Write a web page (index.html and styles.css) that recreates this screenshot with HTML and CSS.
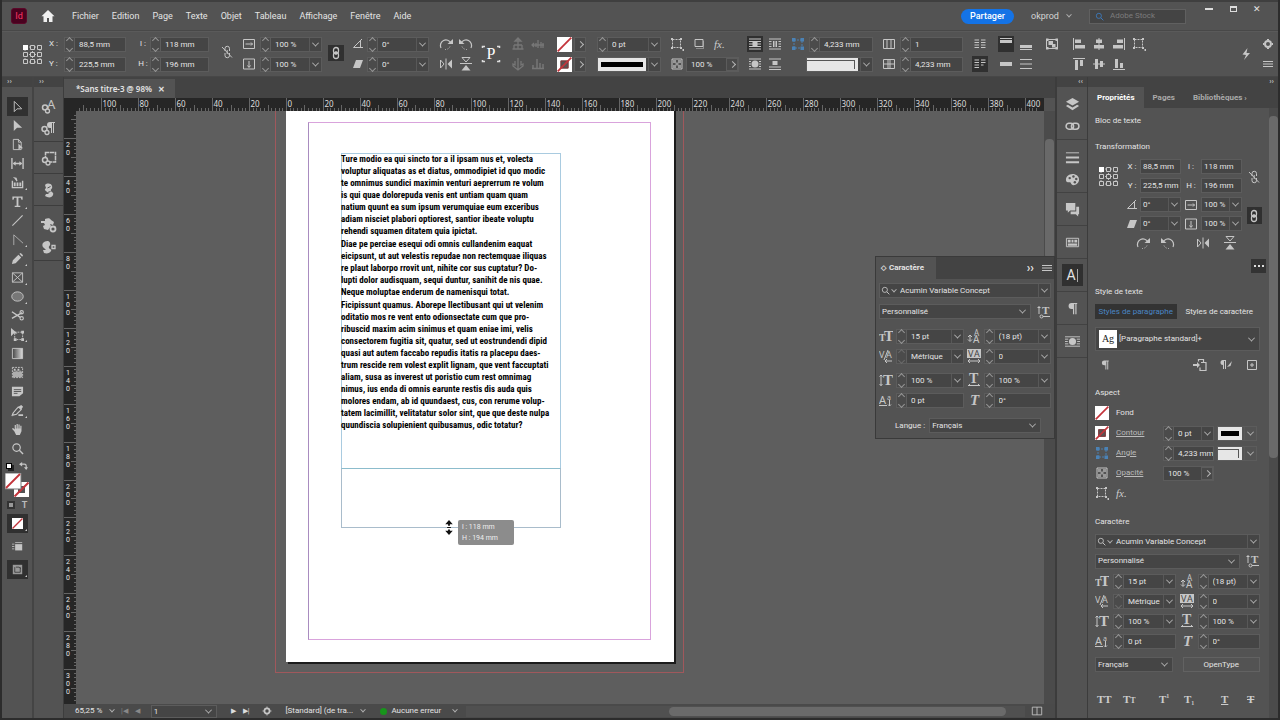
FILE: index.html
```html
<!DOCTYPE html>
<html lang="fr">
<head>
<meta charset="utf-8">
<title>Sans titre-3</title>
<link rel="stylesheet" href="styles.css">
</head>
<body>
<svg class="sprite" aria-hidden="true">
  <defs>
  <symbol id="home" viewBox="0 0 14 14"><path d="M7 1 0.5 7.2h2V13H6V9h2v4h3.500V7.200h2z" fill="currentColor"/></symbol>
  <symbol id="ref" viewBox="0 0 21 21"><path d="M3 3h15v15H3zM3 10.500h15M10.500 3v15" fill="none" stroke="#bbb" stroke-dasharray="1 1"/><g fill="#535353" stroke="#c8c8c8"><path d="M8.500 1.500h4v4h-4zM15.500 1.500h4v4h-4zM1.500 8.500h4v4h-4zM8.500 8.500h4v4h-4zM15.500 8.500h4v4h-4zM1.500 15.500h4v4h-4zM8.500 15.500h4v4h-4zM15.500 15.500h4v4h-4z"/></g><path d="M1 1h5v5H1z" fill="#fff"/></symbol>
  <symbol id="link" viewBox="0 0 14 14"><g fill="none" stroke="currentColor" stroke-width="1.300"><rect x="4.500" y="1.500" width="5" height="6" rx="2.500"/><rect x="4.500" y="6.500" width="5" height="6" rx="2.500"/><path d="M7 5v4"/></g></symbol>
  <symbol id="unlink" viewBox="0 0 14 14"><g fill="none" stroke="currentColor"><path d="M5 6V3.500a2 2 0 0 1 4.500 0V6M5 8v2.500a2 2 0 0 0 4.500 0V8M7.200 5v4M2 2l10 10.500"/></g></symbol>
  <symbol id="links" viewBox="0 0 14 14"><g fill="none" stroke="currentColor" stroke-width="1.400"><rect x="1" y="4" width="7" height="5.500" rx="2.700"/><rect x="6" y="4" width="7" height="5.500" rx="2.700"/></g></symbol>
  <symbol id="sx" viewBox="0 0 14 14"><path d="M1.500 2.500h11v9h-11zM3.500 7h7M9 5.500 10.500 7 9 8.500" fill="none" stroke="currentColor"/></symbol>
  <symbol id="sy" viewBox="0 0 14 14"><path d="M1.500 2h11v10h-11zM7 4v6M5.500 8.500 7 10.500 8.500 8.500" fill="none" stroke="currentColor"/></symbol>
  <symbol id="ang" viewBox="0 0 14 14"><path d="M11 2 2.500 10.500H12M9.500 4v6.500" fill="none" stroke="currentColor"/></symbol>
  <symbol id="shear" viewBox="0 0 14 14"><path d="M5 3h7l-3 8H2z" fill="currentColor"/></symbol>
  <symbol id="cw" viewBox="0 0 16 14"><path d="M3 11A5 5 0 1 1 13 6" fill="none" stroke="currentColor" stroke-width="1.200"/><path d="M9.500 7H15V2z" fill="currentColor"/><path d="M7 12.500a5 5 0 0 0 5-3" fill="none" stroke="currentColor" stroke-dasharray="1 1.500"/></symbol>
  <symbol id="ccw" viewBox="0 0 16 14"><path d="M13 11A5 5 0 1 0 3 6" fill="none" stroke="currentColor" stroke-width="1.200"/><path d="M6.500 7H1V2z" fill="currentColor"/><path d="M9 12.500a5 5 0 0 1-5-3" fill="none" stroke="currentColor" stroke-dasharray="1 1.500"/></symbol>
  <symbol id="fh" viewBox="0 0 16 14"><path d="M2.500 3v8L6 7zM8 1.500v11" fill="none" stroke="currentColor"/><path d="M14 2.500v9L9.500 7z" fill="currentColor"/></symbol>
  <symbol id="fv" viewBox="0 0 16 14"><path d="M4 .5h8L8 5zM2 6.500h12" fill="none" stroke="currentColor"/><path d="M3.500 13.500h9L8 8z" fill="currentColor"/></symbol>
  <symbol id="corners" viewBox="0 0 22 22"><path d="M2.500 5V3.500H5M17 3.500h2.500V5M19.500 17v1.500H17M5 18.500H2.500V17" fill="none" stroke="#ddd" stroke-width="1.500"/></symbol>
  <symbol id="t1" viewBox="0 0 14 14"><path d="M7 1v11M7 1l-3 3h6zM3 8v4M11 8v4M1.500 12h11M3 8h8" fill="none" stroke="currentColor" stroke-width="1.300"/></symbol>
  <symbol id="t2" viewBox="0 0 14 14"><path d="M1 8h12M3 6 1 8l2 2M7 3v8M10 5v6M12 6v5M5 6v4" fill="none" stroke="currentColor" stroke-width="1.300"/></symbol>
  <symbol id="t3" viewBox="0 0 14 14"><path d="M7 1v11M4 4v4l-2-1v2l5 4 5-4V7l-2 1V4" fill="none" stroke="currentColor" stroke-width="1.300"/></symbol>
  <symbol id="t4" viewBox="0 0 14 14"><path d="M2 8v4M6 2v10M9 6v6M12 7v5M1 11.500h12" fill="none" stroke="currentColor" stroke-width="1.500"/></symbol>
  <symbol id="none" viewBox="0 0 15 15"><path d="M0 0h15v15H0z" fill="#fff"/><path d="M.7 14.300 14.300.7" stroke="#c3343b" stroke-width="1.800"/></symbol>
  <symbol id="nstroke" viewBox="0 0 15 15"><path d="M0 0h15v15H0z" fill="#fff"/><path d="M3.500 3.500h8v8h-8z" fill="#555"/><path d="M4 4h7v7H4z" fill="none" stroke="#8a3035"/><path d="M.7 14.300 14.300.7" stroke="#c3343b" stroke-width="1.800"/></symbol>
  <symbol id="frame" viewBox="0 0 14 14"><path d="M2.500 2.500h8v8h-8z" fill="none" stroke="currentColor" stroke-dasharray="2 1"/><path d="M1 1h2v2H1zM10 1h2v2h-2zM1 10h2v2H1zM10 10h2v2h-2zM12.500 12H14v2h-1.500z" fill="currentColor"/></symbol>
  <symbol id="shadow" viewBox="0 0 14 14"><path d="M3 2.500h8v7H3z" fill="none" stroke="currentColor"/><path d="M4 11.500h8M11.500 4v8" stroke="currentColor" opacity=".5"/></symbol>
  <symbol id="opac" viewBox="0 0 14 14"><path d="M2 2h10v10H2z" fill="none" stroke="currentColor"/><path d="M3 3h3v3H3zM8 3h3v3H8zM5.500 5.500h3v3h-3zM3 8h3v3H3zM8 8h3v3H8z" fill="currentColor" opacity=".6"/></symbol>
  <symbol id="w1" viewBox="0 0 14 14"><path d="M1 2h12M1 4.500h12M1 7h12M1 9.500h12M1 12h12" stroke="currentColor"/><path d="M4.500 4h5v6h-5z" fill="currentColor"/></symbol>
  <symbol id="w2" viewBox="0 0 14 14"><path d="M1 2h12M1 12h12M1 4.500h2.500M1 7h2.500M1 9.500h2.500M10.500 4.500H13M10.500 7H13M10.500 9.500H13" stroke="currentColor"/><path d="M5 4h1.500v6H5zM7.500 4H9v6H7.500z" fill="currentColor"/></symbol>
  <symbol id="w3" viewBox="0 0 14 14"><path d="M1 2h12M1 12h12M1 4.500h2M1 7h2M1 9.500h2M11 4.500h2M11 7h2M11 9.500h2" stroke="currentColor"/><circle cx="7" cy="7" r="3.500" fill="currentColor"/></symbol>
  <symbol id="w4" viewBox="0 0 14 14"><path d="M1 2h12M1 10h12M1 12.500h12" stroke="currentColor"/><path d="M4.500 4h5v4h-5z" fill="currentColor"/></symbol>
  <symbol id="corner" viewBox="0 0 14 14"><path d="M3 3v8h8V3z" fill="none" stroke="#4d7fae" stroke-dasharray="2 1"/><path d="M1 1h3.500v3.500H1zM9.500 1H13v3.500H9.500zM1 9.500h3.500V13H1zM9.500 9.500H13V13H9.500z" fill="#4b82b5"/></symbol>
  <symbol id="cols" viewBox="0 0 14 14"><path d="M1.500 2.500h11v9h-11zM5 2.500v9M9 2.500v9" fill="none" stroke="currentColor"/></symbol>
  <symbol id="split" viewBox="0 0 14 14"><path d="M1.500 2.500h11v9h-11zM7 2.500v9" fill="none" stroke="currentColor"/></symbol>
  <symbol id="cells" viewBox="0 0 14 14"><path d="M1.500 2.500h11v9h-11zM1.500 7h11M6 2.500v9M8 2.500v9" fill="none" stroke="currentColor"/></symbol>
  <symbol id="bal" viewBox="0 0 14 14"><path d="M1.500 3h4.500M1.500 5.500h4.500M1.500 8h4.500M1.500 10.500h4.500M8 3h4.500M8 5.500h4.500M8 8h4.500M8 10.500h4.500" stroke="currentColor"/></symbol>
  <symbol id="bal2" viewBox="0 0 14 14"><path d="M1.500 3h4.500M1.500 5.500h4.500M1.500 8h4.500M1.500 10.500h4.500M8 3h4.500M8 5.500h4.500M8 8h2.500" stroke="currentColor"/></symbol>
  <symbol id="vt" viewBox="0 0 14 14"><path d="M1 1.500h12" stroke="currentColor"/><path d="M1 3h12v3H1z" fill="currentColor"/></symbol>
  <symbol id="vb" viewBox="0 0 14 14"><path d="M1 12.500h12" stroke="currentColor"/><path d="M1 8h12v3H1z" fill="currentColor"/></symbol>
  <symbol id="vm" viewBox="0 0 14 14"><path d="M1 5h12v4H1z" fill="currentColor"/></symbol>
  <symbol id="vj" viewBox="0 0 14 14"><path d="M1 2.500h12M1 7h12M1 11.500h12" stroke="currentColor"/></symbol>
  <symbol id="fit" viewBox="0 0 14 14"><path d="M1.500 2.500h11v9h-11z" fill="none" stroke="currentColor"/><path d="M1 1.500h2.500V4H1zM10.500 1.500H13V4h-2.500zM1 10h2.500v2.500H1zM10.500 10H13v2.500h-2.500zM3.500 4H8v4H3.500zM7 7h3.500v3.500H7z" fill="currentColor"/></symbol>
  <symbol id="al" viewBox="0 0 14 14"><path d="M1.500 1v12" stroke="currentColor"/><path d="M3 2.500h6v3.500H3zM3 8h10v3.500H3z" fill="currentColor"/></symbol>
  <symbol id="ac" viewBox="0 0 14 14"><path d="M7 1v12" stroke="currentColor"/><path d="M4 2.500h6V6H4zM2 8h10v3.500H2z" fill="currentColor"/></symbol>
  <symbol id="ar" viewBox="0 0 14 14"><path d="M12.500 1v12" stroke="currentColor"/><path d="M5 2.500h6V6H5zM1 8h10v3.500H1z" fill="currentColor"/></symbol>
  <symbol id="at" viewBox="0 0 14 14"><path d="M1 1.500h12" stroke="currentColor"/><path d="M3 3h3v10H3zM8 3h3v6H8z" fill="currentColor"/></symbol>
  <symbol id="am" viewBox="0 0 14 14"><path d="M1 7h12" stroke="currentColor"/><path d="M3 2h3v10H3zM8 4h3v6H8z" fill="currentColor"/></symbol>
  <symbol id="ab" viewBox="0 0 14 14"><path d="M1 12.500h12" stroke="currentColor"/><path d="M3 2h3v9H3zM8 6h3v5H8z" fill="currentColor"/></symbol>
  <symbol id="bolt" viewBox="0 0 14 14"><path d="M8.500 1 3.500 7.500 7 8 5 13 11 6 7.500 6z" fill="currentColor"/></symbol>
  <symbol id="gear" viewBox="0 0 14 14"><circle cx="7" cy="7" r="3" fill="none" stroke="currentColor" stroke-width="2"/><path d="M7 2v1M7 11v1M2 7h1M11 7h1" stroke="currentColor" stroke-width="2"/></symbol>
  <symbol id="menu" viewBox="0 0 14 14"><path d="M2 4.500h10M2 7h10M2 9.500h10" stroke="currentColor"/></symbol>
  <symbol id="search" viewBox="0 0 14 14"><circle cx="6" cy="6" r="4" fill="none" stroke="currentColor" stroke-width="1.300"/><path d="m9 9 4 4" stroke="currentColor" stroke-width="1.500"/></symbol>
  <symbol id="sel" viewBox="0 0 14 14"><path d="M3.500 1.500v11l3-3h5z" fill="none" stroke="currentColor"/></symbol>
  <symbol id="dsel" viewBox="0 0 14 14"><path d="M3 1v12l3.500-3.500H12z" fill="currentColor"/></symbol>
  <symbol id="page" viewBox="0 0 14 14"><path d="M2.500 1.500H8l3 3v8H2.500zM8 1.500v3h3" fill="none" stroke="currentColor"/><path d="M8 6v7l2-2h3z" fill="currentColor"/></symbol>
  <symbol id="gap" viewBox="0 0 14 14"><path d="M1 1v12M13 1v12M2.500 7h9" stroke="currentColor" stroke-width="1.500"/><path d="M5 4.500 2 7l3 2.500zM9 4.500 12 7 9 9.500z" fill="currentColor"/></symbol>
  <symbol id="collect" viewBox="0 0 14 14"><path d="M1.500 5v7.500h11V5" fill="none" stroke="currentColor" stroke-width="1.500"/><path d="M3 7h2v4H3zM6 7h2v4H6zM9 7h2v4H9zM2 1l4 1 1 3-1 1-2-3z" fill="currentColor"/></symbol>
  <symbol id="type" viewBox="0 0 14 14"><path d="M1.500 1.500h11v3.500h-1.200L10.500 3H8v8.500h2V13H4v-1.500h2V3H3.500L2.700 5H1.500z" fill="currentColor"/></symbol>
  <symbol id="line" viewBox="0 0 14 14"><path d="m1.500 12.500 11-11" stroke="currentColor" stroke-width="1.200"/></symbol>
  <symbol id="pen" viewBox="0 0 14 14"><path d="M3 13V2l10 9" fill="none" stroke="currentColor" stroke-opacity=".8"/></symbol>
  <symbol id="pencil" viewBox="0 0 14 14"><path d="m1 13 1-4 6-6 3 3-6 6zM9 2l1.500-1 2.500 2.500L12 5z" fill="currentColor"/></symbol>
  <symbol id="rectf" viewBox="0 0 14 14"><path d="M1.500 2h11v10h-11zM1.500 2l11 10M12.500 2l-11 10" fill="none" stroke="currentColor"/></symbol>
  <symbol id="ell" viewBox="0 0 14 14"><ellipse cx="7" cy="7" rx="6.200" ry="5" fill="#777" stroke="currentColor"/></symbol>
  <symbol id="cut" viewBox="0 0 14 14"><path d="m1 3 9 6M1 10l11-6" stroke="currentColor" stroke-width="1.500"/><circle cx="11.500" cy="10" r="1.800" fill="none" stroke="currentColor" stroke-width="1.200"/><circle cx="11.500" cy="3.500" r="1.800" fill="none" stroke="currentColor" stroke-width="1.200"/></symbol>
  <symbol id="trans" viewBox="0 0 14 14"><path d="M4 4.500h8.500v8H4z" fill="none" stroke="currentColor" stroke-dasharray="2 1"/><path d="M0 0v9l3-3h4zM11 3h3v3h-3zM11 11h3v3h-3zM3 11h3v3H3z" fill="currentColor"/></symbol>
  <symbol id="grad" viewBox="0 0 14 14"><path d="M1.500 1.500h11v11h-11z" fill="url(#gr)" stroke="currentColor"/></symbol>
  <linearGradient id="gr"><stop offset="0" stop-color="#444"/><stop offset="1" stop-color="#ddd"/></linearGradient>
  <symbol id="feather" viewBox="0 0 14 14"><path d="M1.500 1.500h11v11h-11z" fill="none" stroke="currentColor" stroke-dasharray="2 1"/><path d="M2 6h10v6H2z" fill="currentColor" opacity=".8"/><path d="M3 3h2v2H3zM7 3h2v2H7zM5 5h2v1H5zM9 5h2v1H9z" fill="currentColor"/></symbol>
  <symbol id="note" viewBox="0 0 14 14"><path d="M1 2h12v7l-4 3H1z" fill="currentColor"/><path d="M3 5h8M3 7h8M3 9h4" stroke="#535353"/></symbol>
  <symbol id="eye" viewBox="0 0 14 14"><path d="M1 13c1-5 5-7 7-10M8 3l3 3-5 5-4 1" fill="none" stroke="currentColor" stroke-width="1.200"/><path d="m8 3 3-2 2 2-2 3zM8 11h5v2H8z" fill="currentColor"/></symbol>
  <symbol id="hand" viewBox="0 0 14 14"><path d="M3.500 9 1 6.200l1.200-.7L4 7V2.200h1.300V6H6V1h1.300v5H8V1.500h1.300V6h.7V3h1.300v6L9.500 13h-4z" fill="currentColor"/></symbol>
  <symbol id="swap" viewBox="0 0 10 10"><path d="M2 3.500h4a2 2 0 0 1 2 2V8" fill="none" stroke="currentColor" stroke-width="1.300"/><path d="M3.500 1v5L0 3.500zM5.500 7H10L8 10z" fill="currentColor"/></symbol>
  <symbol id="proxy" viewBox="0 0 24 24"><path d="M9 9h15v15H9z" fill="#fff"/><path d="M13 13h7v7h-7z" fill="#535353"/><path d="M9.500 23.500 23.500 9.500" stroke="#c3343b" stroke-width="2"/><path d="M0 0h16v16H0z" fill="#fff" stroke="#777"/><path d="M1 15 15 1" stroke="#c3343b" stroke-width="1.800"/></symbol>
  <symbol id="scr" viewBox="0 0 14 14"><path d="M4 4h9v8H4z" fill="currentColor"/><path d="M0 4h3M0 7h3M0 10h3M4 2h9" stroke="currentColor"/></symbol>
  <symbol id="view" viewBox="0 0 14 14"><path d="M1 1h12v12H1z" fill="#999"/><path d="M3.500 4v6.500h7V4M5 4h4l2 2" fill="none" stroke="#333"/></symbol>
  <symbol id="sA" viewBox="0 0 16 16"><text x="6" y="11" class="gs" font-size="13">A</text><circle cx="4" cy="9.500" r="2.500" fill="none" stroke="currentColor" stroke-width="1.500"/><circle cx="6.500" cy="13" r="2" fill="#535353" stroke="currentColor" stroke-width="1.300"/></symbol>
  <symbol id="sP" viewBox="0 0 16 16"><path d="M14 2H9a3 3 0 0 0 0 6h1v5h1V3h1v10h1V3h1z" fill="currentColor"/><circle cx="3.500" cy="9" r="2.500" fill="none" stroke="currentColor" stroke-width="1.500"/><circle cx="6" cy="12.500" r="2" fill="#535353" stroke="currentColor" stroke-width="1.300"/></symbol>
  <symbol id="sO" viewBox="0 0 16 16"><path d="M4.500 2.500h10v9.500h-10z" fill="none" stroke="currentColor" stroke-width="1.500" stroke-dasharray="4 .5"/><circle cx="4" cy="10" r="2.500" fill="#535353" stroke="currentColor" stroke-width="1.500"/><circle cx="7" cy="13" r="2" fill="#535353" stroke="currentColor" stroke-width="1.300"/></symbol>
  <symbol id="dna" viewBox="0 0 16 16"><path d="M4 3c2-2 6-2 7 1s-2 3-1 5 3 1 2 4-5 3-8 1l1-2h3L5 9c-2-1-1-2 0-3z" fill="currentColor"/><path d="m6.500 6 3-1.500M6.500 10.500l3-1" stroke="#535353"/></symbol>
  <symbol id="dna2" viewBox="0 0 16 16"><path d="M0 4h4V2c3-1 5-1 6 1l3 2-1 3-3-1 1 2-3 4-4-1-1-3 2-1-1-2H0z" fill="currentColor"/><circle cx="12" cy="12" r="2.500" fill="none" stroke="currentColor" stroke-width="1.800"/></symbol>
  <symbol id="dna3" viewBox="0 0 16 16"><path d="M2 4c2-2 6-3 7 0s-2 3-1 5 3 1 2 3-4 3-7 2l-1-3h3L3 9C1 8 1 5 2 4z" fill="currentColor"/><path d="M11 6.500h3v3h-3z" fill="none" stroke="currentColor" stroke-width="1.300"/></symbol>
  <symbol id="layers" viewBox="0 0 16 16"><path d="m8 1 7 4-7 4-7-4z" fill="currentColor"/><path d="m1 9.500 2-1.200 5 3 5-3 2 1.200L8 14z" fill="currentColor"/></symbol>
  <symbol id="strokes" viewBox="0 0 16 16"><path d="M1 3h14" stroke="currentColor"/><path d="M1 8h14M1 13h14" stroke="currentColor" stroke-width="2"/></symbol>
  <symbol id="pal" viewBox="0 0 16 16"><path d="M8 2c4 0 7 2.500 7 6s-3 6-6 6-2-3-4-3-4 0-4-3 3-6 7-6z" fill="currentColor"/><g fill="#535353"><circle cx="5" cy="6.500" r="1.300"/><circle cx="9" cy="4.800" r="1.300"/><circle cx="12" cy="7.500" r="1.300"/><circle cx="10.500" cy="11" r="1.300"/></g></symbol>
  <symbol id="chat" viewBox="0 0 16 16"><path d="M1 1h10v8H5.500L3 11.500V9H1zM12 5h3v8h-1v2.500L11.500 13H6v-3h6z" fill="currentColor"/></symbol>
  <symbol id="sw" viewBox="0 0 16 16"><path d="M1.500 3.500h13v9h-13z" fill="none" stroke="currentColor"/><path d="M3 5h3v3H3zM7 5h2v3H7zM10 5h3v3h-3zM3 9h10v2.500H3z" fill="currentColor"/></symbol>
  <symbol id="para" viewBox="0 0 16 16"><path d="M13 2H7a3.200 3.200 0 0 0 0 6.400h1.500V14h1.300V3.300h1.200V14h1.300V3.300H13z" fill="currentColor"/></symbol>
  <symbol id="wrap" viewBox="0 0 16 14"><path d="M0 2h16M0 12h16M0 4.500h3.500M0 7h3M0 9.500h3.500M12.500 4.500H16M13 7h3M12.500 9.500H16" stroke="currentColor"/><circle cx="8" cy="7" r="3.800" fill="currentColor"/></symbol>
  <symbol id="fs" viewBox="0 0 14 14"><text x="0" y="12" class="gb" font-size="10">T</text><text x="5" y="12" class="gb" font-size="15">T</text></symbol>
  <symbol id="lead" viewBox="0 0 14 14"><text x="7" y="7" class="gs" font-size="8">A</text><text x="6" y="14" class="gs" font-size="10">A</text><path d="M3 6v6M1 8l2-2 2 2M1 10.500l2 2 2-2" fill="none" stroke="currentColor"/></symbol>
  <symbol id="kern" viewBox="0 0 14 14"><text x="0" y="9" class="gs" font-size="9">V</text><text x="7" y="9" class="gs" font-size="9">A</text><path d="m9 1-4 10M6 12h7M8 10l-2 2 2 2" fill="none" stroke="currentColor"/></symbol>
  <symbol id="track" viewBox="0 0 14 14"><path d="M0 0h14v9H0z" fill="currentColor"/><text x="1" y="8" font-size="9" class="gd">V</text><text x="7" y="8" font-size="9" class="gd">A</text><path d="M1 12h12M3 10l-2 2 2 2M11 10l2 2-2 2" fill="none" stroke="currentColor"/></symbol>
  <symbol id="vs" viewBox="0 0 14 14"><text x="4" y="12" class="gb" font-size="15">T</text><path d="M2 2v11M.5 3.500 2 2l1.500 1.500M.5 11 2 12.500 3.500 11" fill="none" stroke="currentColor"/></symbol>
  <symbol id="hs" viewBox="0 0 14 14"><text x="2" y="10" class="gb" font-size="14">T</text><path d="M1 12.500h12M3 11l-1.500 1.500M11 11l1.500 1.500" fill="none" stroke="currentColor"/></symbol>
  <symbol id="base" viewBox="0 0 14 14"><text x="0" y="11" class="gs" font-size="11">A</text><text x="8" y="7" class="gs" font-size="7">a</text><path d="M0 12.500h8M10.500 7v6M9 11.500l1.500 1.500 1.500-1.500" fill="none" stroke="currentColor"/></symbol>
  <symbol id="ital" viewBox="0 0 14 14"><text x="3" y="12" class="gb" font-style="italic" font-size="15">T</text></symbol>
  <symbol id="adj" viewBox="0 0 14 14"><text x="5" y="9" class="gb" font-size="11">T</text><path d="M2 1v8M.5 2.500h3M3 11.500h10" stroke="currentColor" fill="none"/><circle cx="4.500" cy="11.500" r="1.500" fill="#535353" stroke="currentColor"/></symbol>
  <symbol id="clr" viewBox="0 0 14 14"><path d="M5.500 3.500v-2h5v3M8 4.500h5v8H7v-3" fill="none" stroke="currentColor" stroke-width="1.200"/><path d="M0 6h4V4l3 3-3 3V8H0z" fill="currentColor"/></symbol>
  <symbol id="redef" viewBox="0 0 14 14"><path d="M7 2H4a2.300 2.300 0 0 0 0 5v4h1V3h1v8h1z" fill="currentColor"/><path d="m8 9 5-6-1.500 5z" fill="currentColor"/></symbol>
  <symbol id="plus" viewBox="0 0 14 14"><path d="M2.500 2.500h9v9h-9zM7 5v4M5 7h4" fill="none" stroke="currentColor"/></symbol>
  <symbol id="rs" viewBox="0 0 10 16"><path d="m5 0 4 4.500H6V6H4V4.500H1zM5 16l4-4.500H6V10H4v1.500H1zM3 7.500h4v1H3z" fill="#111"/></symbol>
  </defs>
</svg>

<div class="app">
  <header class="titlebar">
    <span class="logo">Id</span>
    <button class="ic home" aria-label="Accueil"><svg><use href="#home"/></svg></button>
    <nav class="menus">
      <button>Fichier</button><button>Edition</button><button>Page</button><button>Texte</button><button>Objet</button><button>Tableau</button><button>Affichage</button><button>Fenêtre</button><button>Aide</button>
    </nav>
    <button class="share">Partager</button>
    <button class="user">okprod <i class="cv"></i></button>
    <label class="stock"><svg><use href="#search"/></svg><input type="text" placeholder="Adobe Stock" aria-label="Adobe Stock"></label>
    <div class="win"><button aria-label="Réduire"><i class="min"></i></button><button aria-label="Agrandir"><i class="max"></i></button><button aria-label="Fermer">✕</button></div>
  </header>

  <section class="controls" aria-label="Contrôle">
    <div class="g g-ref"><svg class="refpt"><use href="#ref"/></svg></div>
    <div class="g two g-pos">
      <div class="r"><label for="cx">X :</label><span class="fld"><button class="spin" aria-label="Pas X"></button><input id="cx" value="88,5 mm"></span></div>
      <div class="r"><label for="cy">Y :</label><span class="fld"><button class="spin" aria-label="Pas Y"></button><input id="cy" value="225,5 mm"></span></div>
    </div>
    <div class="g two g-size">
      <div class="r"><label for="cl">l :</label><span class="fld"><button class="spin" aria-label="Pas l"></button><input id="cl" value="118 mm"></span></div>
      <div class="r"><label for="ch">H :</label><span class="fld"><button class="spin" aria-label="Pas H"></button><input id="ch" value="196 mm"></span></div>
    </div>
    <div class="g g-un"><button class="ic" aria-label="Proportions"><svg><use href="#unlink"/></svg></button></div>
    <div class="g two g-scale">
      <div class="r"><svg><use href="#sx"/></svg><span class="fld"><button class="spin" aria-label="Pas"></button><input aria-label="Échelle X" value="100 %"><button class="chev" aria-label="Liste"></button></span></div>
      <div class="r"><svg><use href="#sy"/></svg><span class="fld"><button class="spin" aria-label="Pas"></button><input aria-label="Échelle Y" value="100 %"><button class="chev" aria-label="Liste"></button></span></div>
    </div>
    <div class="g g-link"><button class="ic on" aria-label="Lier"><svg><use href="#link"/></svg></button></div>
    <div class="g two g-ang">
      <div class="r"><svg><use href="#ang"/></svg><span class="fld"><button class="spin" aria-label="Pas"></button><input aria-label="Rotation" value="0°"><button class="chev" aria-label="Liste"></button></span></div>
      <div class="r"><svg><use href="#shear"/></svg><span class="fld"><button class="spin" aria-label="Pas"></button><input aria-label="Cisaillement" value="0°"><button class="chev" aria-label="Liste"></button></span></div>
    </div>
    <div class="g quad g-rot"><svg><use href="#cw"/></svg><svg><use href="#ccw"/></svg><svg><use href="#fh"/></svg><svg><use href="#fv"/></svg></div>
    <div class="g g-p"><span class="pbox"><svg><use href="#corners"/></svg><b>P</b></span></div>
    <div class="g quad g-dim"><svg><use href="#t1"/></svg><svg><use href="#t2"/></svg><svg><use href="#t3"/></svg><svg><use href="#t4"/></svg></div>
    <div class="g two g-sw">
      <div class="r"><svg><use href="#none"/></svg><button class="go" aria-label="Fond"></button></div>
      <div class="r"><svg><use href="#nstroke"/></svg><button class="go" aria-label="Contour"></button></div>
    </div>
    <div class="g two g-st">
      <div class="r"><span class="fld"><button class="spin" aria-label="Pas"></button><input aria-label="Épaisseur" value="0 pt"><button class="chev" aria-label="Liste"></button></span></div>
      <div class="r"><span class="fld"><button class="pic bar" aria-label="Type de contour"><i></i></button><button class="chev" aria-label="Liste"></button></span></div>
    </div>
    <div class="g two g-fx">
      <div class="r"><svg><use href="#frame"/></svg><svg><use href="#shadow"/></svg><em>fx.</em></div>
      <div class="r"><svg><use href="#opac"/></svg><span class="fld"><input aria-label="Opacité" value="100 %"><button class="go" aria-label="Régler"></button></span></div>
    </div>
    <div class="g quad g-wrap"><button class="ic on" aria-label="Sans habillage"><svg><use href="#w1"/></svg></button><button class="ic" aria-label="Habillage bloc"><svg><use href="#w2"/></svg></button><button class="ic" aria-label="Habillage forme"><svg><use href="#w3"/></svg></button><button class="ic" aria-label="Sauter"><svg><use href="#w4"/></svg></button></div>
    <div class="g two g-cor">
      <div class="r"><svg><use href="#corner"/></svg><span class="fld"><button class="spin" aria-label="Pas"></button><input aria-label="Angle" value="4,233 mm"></span></div>
      <div class="r"><span class="fld"><button class="pic cnr" aria-label="Forme d'angle"><i></i></button><button class="chev" aria-label="Liste"></button></span></div>
    </div>
    <div class="g two g-cols">
      <div class="r"><svg><use href="#cols"/></svg><span class="fld"><button class="spin" aria-label="Pas"></button><input aria-label="Colonnes" value="1"></span></div>
      <div class="r"><svg><use href="#cells"/></svg><span class="fld"><button class="spin" aria-label="Pas"></button><input aria-label="Gouttière" value="4,233 mm"></span></div>
    </div>
    <div class="g two g-bal"><button class="ic" aria-label="Colonnes libres"><svg><use href="#bal"/></svg></button><button class="ic on" aria-label="Équilibrer"><svg><use href="#bal2"/></svg></button></div>
    <div class="g quad g-va"><button class="ic on" aria-label="Haut"><svg><use href="#vt"/></svg></button><button class="ic" aria-label="Bas"><svg><use href="#vb"/></svg></button><button class="ic" aria-label="Centre"><svg><use href="#vm"/></svg></button><button class="ic" aria-label="Justifier"><svg><use href="#vj"/></svg></button></div>
    <div class="g two g-fit"><button class="ic" aria-label="Ajuster"><svg><use href="#fit"/></svg></button></div>
    <div class="g four"><svg><use href="#al"/></svg><svg><use href="#ac"/></svg><svg><use href="#ar"/></svg><svg><use href="#frame"/></svg><svg><use href="#at"/></svg><svg><use href="#am"/></svg><svg><use href="#ab"/></svg></div>
    <div class="g g-end"><button class="ic" aria-label="Actions rapides"><svg><use href="#bolt"/></svg></button><div class="g two"><button class="ic" aria-label="Réglages"><svg><use href="#gear"/></svg></button><button class="ic" aria-label="Menu"><svg><use href="#menu"/></svg></button></div></div>
  </section>

  <main class="work">
    <aside class="col tools">
      <div class="strip">››</div>
      <div class="toolset">
        <button class="on" aria-label="Sélection"><svg><use href="#sel"/></svg></button>
        <button aria-label="Sélection directe"><svg><use href="#dsel"/></svg></button>
        <button aria-label="Page"><svg><use href="#page"/></svg></button>
        <button aria-label="Espace"><svg><use href="#gap"/></svg></button>
        <button class="more" aria-label="Collecte"><svg><use href="#collect"/></svg></button>
        <button class="more" aria-label="Texte"><svg><use href="#type"/></svg></button>
        <button aria-label="Trait"><svg><use href="#line"/></svg></button>
        <button class="more" aria-label="Plume"><svg><use href="#pen"/></svg></button>
        <button class="more" aria-label="Crayon"><svg><use href="#pencil"/></svg></button>
        <button class="more" aria-label="Bloc rectangulaire"><svg><use href="#rectf"/></svg></button>
        <button class="more" aria-label="Ellipse"><svg><use href="#ell"/></svg></button>
        <button aria-label="Ciseaux"><svg><use href="#cut"/></svg></button>
        <button class="more" aria-label="Transformation"><svg><use href="#trans"/></svg></button>
        <button aria-label="Dégradé"><svg><use href="#grad"/></svg></button>
        <button aria-label="Contour progressif"><svg><use href="#feather"/></svg></button>
        <button aria-label="Note"><svg><use href="#note"/></svg></button>
        <button class="more" aria-label="Pipette"><svg><use href="#eye"/></svg></button>
        <button aria-label="Main"><svg><use href="#hand"/></svg></button>
        <button aria-label="Zoom"><svg><use href="#search"/></svg></button>
      </div>
      <div class="mini"><i class="defsw"></i><svg><use href="#swap"/></svg></div>
      <svg class="proxy"><use href="#proxy"/></svg>
      <div class="mini"><i class="box"></i><b>T</b></div>
      <div class="modes">
        <button class="on more" aria-label="Sans couleur"><svg><use href="#none"/></svg></button>
        <button aria-label="Affichage"><svg><use href="#scr"/></svg></button>
        <button class="on more" aria-label="Aperçu"><svg><use href="#view"/></svg></button>
      </div>
    </aside>
    <aside class="col side">
      <div class="strip">››</div>
      <div class="sg"><button aria-label="Styles de caractère"><svg><use href="#sA"/></svg></button><button aria-label="Styles de paragraphe"><svg><use href="#sP"/></svg></button></div>
      <div class="sg one"><button aria-label="Styles d'objet"><svg><use href="#sO"/></svg></button></div>
      <div class="sg one"><button aria-label="Scripts"><svg><use href="#dna"/></svg></button></div>
      <div class="sg"><button aria-label="Liens de script"><svg><use href="#dna2"/></svg></button><button aria-label="Étiquettes"><svg><use href="#dna3"/></svg></button></div>
    </aside>

    <section class="doc">
      <div class="tabs"><div class="tab">*Sans titre-3 @ 98%<button aria-label="Fermer l'onglet">✕</button></div></div>
      <div class="view">
        <div class="origin"></div>
        <svg class="hr" id="hruler"></svg>
        <svg class="vr" id="vruler"></svg>
        <div class="canvas">
          <div class="bleed"></div>
          <div class="sheet"></div>
          <div class="margins"></div>
          <article class="frame">
            <p>Ture modio ea qui sincto tor a il ipsam nus et, volecta<br>voluptur aliquatas as et diatus, ommodipiet id quo modic<br>te omnimus sundici maximin venturi aeprerrum re volum<br>is qui quae dolorepuda venis ent untiam quam quam<br>natium quunt ea sum ipsum verumquiae eum exceribus<br>adiam nisciet plabori optiorest, santior ibeate voluptu<br>rehendi squamen ditatem quia ipictat.</p>
            <p>Diae pe perciae esequi odi omnis cullandenim eaquat<br>eicipsunt, ut aut velestis repudae non rectemquae iliquas<br>re plaut laborpo rrovit unt, nihite cor sus cuptatur? Do-<br>lupti dolor audisquam, sequi duntur, sanihit de nis quae.<br>Neque moluptae enderum de namenisqui totat.</p>
            <p>Ficipissunt quamus. Aborepe llectibusant qui ut velenim<br>oditatio mos re vent ento odionsectate cum que pro-<br>ribuscid maxim acim sinimus et quam eniae imi, velis<br>consectorem fugitia sit, quatur, sed ut eostrundendi dipid<br>quasi aut autem faccabo repudis itatis ra placepu daes-<br>trum rescide rem volest explit lignam, que vent faccuptati<br>aliam, susa as inverest ut poristio cum rest omnimag<br>nimus, ius enda di omnis earunte restis dis auda quis<br>molores endam, ab id quundaest, cus, con rerume volup-<br>tatem lacimillit, velitatatur solor sint, que que deste nulpa<br>quundiscia solupienient quibusamus, odic totatur?</p>
          </article>
          <div class="resize"></div>
          <svg class="cursor"><use href="#rs"/></svg>
          <div class="tip">l : 118 mm<br>H : 194 mm</div>
        </div>
        <div class="vscroll"><i></i></div>
      </div>
      <footer class="status">
        <span class="zoom">65,25 %<i class="cv"></i></span>
        <span class="nav"><button aria-label="Première page">|◀</button><button aria-label="Page précédente">◀</button></span>
        <span class="sel pg"><select aria-label="Page"><option>1</option></select></span>
        <span class="nav lit"><button aria-label="Page suivante">▶</button><button aria-label="Dernière page">▶|</button></span>
        <svg class="pre"><use href="#gear"/></svg>
        <span class="std">[Standard] (de tra...<i class="cv"></i></span>
        <span class="ok">Aucune erreur<i class="cv"></i></span>
        <span class="hscroll"><i></i></span>
        <svg class="split"><use href="#split"/></svg>
      </footer>

      <section class="float" aria-label="Caractère">
        <header><span class="ftab"><small>◇</small>Caractère</span><span class="fx">››</span><svg><use href="#menu"/></svg></header>
        <div class="fbody chars">
          <span class="fld font"><svg><use href="#search"/></svg><i class="cv"></i><input aria-label="Police" value="Acumin Variable Concept"><button class="chev" aria-label="Liste"></button></span>
          <div class="r sty"><span class="sel"><select aria-label="Style de police"><option>Personnalisé</option></select></span><svg><use href="#adj"/></svg></div>
          <div class="cg">
            <svg><use href="#fs"/></svg><span class="fld"><button class="spin" aria-label="Pas"></button><input aria-label="Corps" value="15 pt"><button class="chev" aria-label="Liste"></button></span>
            <svg><use href="#lead"/></svg><span class="fld"><button class="spin" aria-label="Pas"></button><input aria-label="Interligne" value="(18 pt)"><button class="chev" aria-label="Liste"></button></span>
            <svg><use href="#kern"/></svg><span class="fld"><button class="spin off" aria-label="Pas"></button><input aria-label="Crénage" value="Métrique"><button class="chev" aria-label="Liste"></button></span>
            <svg><use href="#track"/></svg><span class="fld"><button class="spin" aria-label="Pas"></button><input aria-label="Approche" value="0"><button class="chev" aria-label="Liste"></button></span>
          </div>
          <div class="cg">
            <svg><use href="#vs"/></svg><span class="fld"><button class="spin" aria-label="Pas"></button><input aria-label="Échelle verticale" value="100 %"><button class="chev" aria-label="Liste"></button></span>
            <svg><use href="#hs"/></svg><span class="fld"><button class="spin" aria-label="Pas"></button><input aria-label="Échelle horizontale" value="100 %"><button class="chev" aria-label="Liste"></button></span>
            <svg><use href="#base"/></svg><span class="fld"><button class="spin" aria-label="Pas"></button><input aria-label="Décalage" value="0 pt"></span>
            <svg><use href="#ital"/></svg><span class="fld"><button class="spin" aria-label="Pas"></button><input aria-label="Inclinaison" value="0°"></span>
          </div>
          <div class="r lang"><label for="flang">Langue :</label><span class="sel"><select id="flang"><option>Français</option></select></span></div>
        </div>
      </section>
    </section>

    <aside class="col dock">
      <div class="strip end">‹‹</div>
      <div class="dg"><button aria-label="Calques"><svg><use href="#layers"/></svg></button><button aria-label="Liens"><svg><use href="#links"/></svg></button></div>
      <div class="dg"><button aria-label="Contour"><svg><use href="#strokes"/></svg></button><button aria-label="Couleur"><svg><use href="#pal"/></svg></button></div>
      <div class="dg one"><button aria-label="Commentaires"><svg><use href="#chat"/></svg></button></div>
      <div class="dg one"><button aria-label="Nuancier"><svg><use href="#sw"/></svg></button></div>
      <div class="dg one"><button class="on big" aria-label="Caractère">A<i></i></button></div>
      <div class="dg one"><button aria-label="Paragraphe"><svg><use href="#para"/></svg></button></div>
      <div class="dg one"><button aria-label="Habillage"><svg><use href="#wrap"/></svg></button></div>
    </aside>

    <aside class="col props">
      <div class="strip end">››</div>
      <div class="ptabs"><button class="act">Propriétés</button><button>Pages</button><button>Bibliothèques ›</button></div>
      <div class="pwrap">
      <div class="pbody">
        <h2 class="first">Bloc de texte</h2>
        <h2>Transformation</h2>
        <div class="tf">
          <svg class="refpt"><use href="#ref"/></svg>
          <div class="tg">
            <label for="px">X :</label><span class="fld"><input id="px" value="88,5 mm"></span><label for="pl">l :</label><span class="fld"><input id="pl" value="118 mm"></span>
            <label for="py">Y :</label><span class="fld"><input id="py" value="225,5 mm"></span><label for="ph">H :</label><span class="fld"><input id="ph" value="196 mm"></span>
            <svg><use href="#ang"/></svg><span class="fld"><input aria-label="Rotation" value="0°"><button class="chev" aria-label="Liste"></button></span><svg><use href="#sx"/></svg><span class="fld"><input aria-label="Échelle X" value="100 %"><button class="chev" aria-label="Liste"></button></span>
            <svg><use href="#shear"/></svg><span class="fld"><input aria-label="Cisaillement" value="0°"><button class="chev" aria-label="Liste"></button></span><svg><use href="#sy"/></svg><span class="fld"><input aria-label="Échelle Y" value="100 %"><button class="chev" aria-label="Liste"></button></span>
          </div>
          <div class="lk"><button class="ic" aria-label="Proportions"><svg><use href="#unlink"/></svg></button><button class="ic on" aria-label="Lier"><svg><use href="#link"/></svg></button></div>
        </div>
        <div class="flips"><svg><use href="#cw"/></svg><svg><use href="#ccw"/></svg><svg><use href="#fh"/></svg><svg><use href="#fv"/></svg></div>
        <div class="dots"><button aria-label="Autres options"><i></i><i></i><i></i></button></div>
        <h2 class="sec">Style de texte</h2>
        <div class="seg"><button class="act">Styles de paragraphe</button><button>Styles de caractère</button></div>
        <div class="pstyle"><b>Ag</b><span class="sel"><select aria-label="Style de paragraphe"><option>[Paragraphe standard]+</option></select></span></div>
        <div class="pact"><svg><use href="#para"/></svg><svg><use href="#clr"/></svg><svg><use href="#redef"/></svg><svg><use href="#plus"/></svg></div>
        <h2 class="sec">Aspect</h2>
        <div class="ap"><svg class="s"><use href="#none"/></svg><span>Fond</span></div>
        <div class="ap"><svg class="s"><use href="#nstroke"/></svg><a href="#contour">Contour</a><span class="fld"><button class="spin" aria-label="Pas"></button><input aria-label="Contour" value="0 pt"><button class="chev" aria-label="Liste"></button></span><span class="fld pk"><button class="pic bar" aria-label="Type"><i></i></button><button class="chev" aria-label="Liste"></button></span></div>
        <div class="ap"><svg><use href="#corner"/></svg><a href="#angle">Angle</a><span class="fld"><button class="spin" aria-label="Pas"></button><input aria-label="Angle" value="4,233 mm"></span><span class="fld pk"><button class="pic cnr" aria-label="Forme"><i></i></button><button class="chev" aria-label="Liste"></button></span></div>
        <div class="ap"><svg><use href="#opac"/></svg><a href="#opacite">Opacité</a><span class="fld"><input aria-label="Opacité" value="100 %"><button class="go" aria-label="Régler"></button></span></div>
        <div class="ap"><svg><use href="#frame"/></svg><em>fx.</em></div>
        <h2 class="sec">Caractère</h2>
        <div class="chars">
          <span class="fld font"><svg><use href="#search"/></svg><i class="cv"></i><input aria-label="Police" value="Acumin Variable Concept"><button class="chev" aria-label="Liste"></button></span>
          <div class="r sty"><span class="sel"><select aria-label="Style de police"><option>Personnalisé</option></select></span><svg><use href="#adj"/></svg></div>
          <div class="cg">
            <svg><use href="#fs"/></svg><span class="fld"><button class="spin" aria-label="Pas"></button><input aria-label="Corps" value="15 pt"><button class="chev" aria-label="Liste"></button></span>
            <svg><use href="#lead"/></svg><span class="fld"><button class="spin" aria-label="Pas"></button><input aria-label="Interligne" value="(18 pt)"><button class="chev" aria-label="Liste"></button></span>
            <svg><use href="#kern"/></svg><span class="fld"><button class="spin off" aria-label="Pas"></button><input aria-label="Crénage" value="Métrique"><button class="chev" aria-label="Liste"></button></span>
            <svg><use href="#track"/></svg><span class="fld"><button class="spin" aria-label="Pas"></button><input aria-label="Approche" value="0"><button class="chev" aria-label="Liste"></button></span>
            <svg><use href="#vs"/></svg><span class="fld"><button class="spin" aria-label="Pas"></button><input aria-label="Échelle verticale" value="100 %"><button class="chev" aria-label="Liste"></button></span>
            <svg><use href="#hs"/></svg><span class="fld"><button class="spin" aria-label="Pas"></button><input aria-label="Échelle horizontale" value="100 %"><button class="chev" aria-label="Liste"></button></span>
            <svg><use href="#base"/></svg><span class="fld"><button class="spin" aria-label="Pas"></button><input aria-label="Décalage" value="0 pt"></span>
            <svg><use href="#ital"/></svg><span class="fld"><button class="spin" aria-label="Pas"></button><input aria-label="Inclinaison" value="0°"></span>
          </div>
          <div class="lot"><span class="sel"><select aria-label="Langue"><option>Français</option></select></span><button>OpenType</button></div>
          <div class="tt"><button>TT</button><button>T<small>T</small></button><button>T<sup>1</sup></button><button>T<sub>1</sub></button><button><u>T</u></button><button><s>T</s></button></div>
        </div>
      </div>
      <div class="pscroll"><i></i></div>
      </div>
    </aside>
  </main>
</div>
<script src="app.js"></script>
</body>
</html>
```
FILE: styles.css
```css
* { box-sizing: border-box; }
html, body { height: 100%; margin: 0; }
body { background: #2f2f2f; color: #e4e4e4; font: 8px/12px Roboto, "Noto Sans", sans-serif; overflow: hidden; }
button, input, select { font: inherit; color: inherit; margin: 0; padding: 0; border: 0; background: none; border-radius: 0; min-width: 0; }
button { display: inline-flex; align-items: center; justify-content: center; }
svg { width: 14px; height: 14px; flex: none; color: #c6c6c6; display: block; }
h2 { font-size: 8px; font-weight: 400; margin: 0; height: 20px; line-height: 20px; }
.sprite { position: absolute; width: 0; height: 0; }
.gb { font-family: "Liberation Serif", serif; font-weight: bold; fill: currentColor; }
.gs { font-family: "Noto Sans", sans-serif; fill: currentColor; }
.gd { font-family: "Noto Sans", sans-serif; fill: #444; }

.app { height: 100vh; display: flex; flex-direction: column; padding: 0 2px 2px; background: #2c2c2c; }
.on { background: #303030; }

/* Title bar */
.titlebar { height: 31px; flex: none; background: #535353; border-top: 2px solid #3f3f3f; border-bottom: 1px solid #484848; display: flex; align-items: center; padding-left: 9px; }
.logo { width: 16px; height: 16px; border-radius: 3px; background: #49021f; border: 1px solid #5b0829; color: #ff3366; font-size: 9px; line-height: 14px; text-align: center; }
.home { width: 14px; margin: 0 17px 0 14px; }
.home svg { color: #f0f0f0; }
.menus { display: flex; gap: 13px; font-size: 9px; flex: 1; }
.share { width: 53px; height: 15px; border-radius: 8px; background: #1473e6; color: #fff; font-size: 9px; font-weight: 500; }
.user { width: 58px; margin-left: 8px; gap: 8px; font-size: 9px; color: #d5d5d5; }
.stock { display: flex; align-items: center; width: 97px; height: 15px; margin-left: 9px; padding-left: 5px; gap: 6px; background: #444; border: 1px solid #606060; }
.stock svg { width: 9px; height: 9px; color: #3c7cc0; }
.stock input { width: 76px; }
.stock input::placeholder { color: #7c7c7c; }
.win { display: flex; width: 92px; padding-left: 11px; height: 14px; align-self: flex-start; }
.win button { width: 24px; font-size: 9px; }
.min { width: 8px; height: 2px; background: #ddd; }
.max { width: 7px; height: 6px; border: 1px solid #ddd; border-top-width: 2px; }

/* Small chevrons and steppers */
.cv, .chev::after, .sel::after { content: ""; width: 4px; height: 4px; border: solid #b0b0b0; border-width: 0 1px 1px 0; transform: rotate(45deg) translate(-1px, -1px); flex: none; display: inline-block; }
.go::after { content: ""; width: 4px; height: 4px; border: solid #b4b4b4; border-width: 1px 1px 0 0; transform: rotate(45deg); }
.spin { width: 10px; height: 100%; flex: none; flex-direction: column; gap: 3px; background: #4b4b4b; border-right: 1px solid #5d5d5d; }
.spin::before, .spin::after { content: ""; width: 4px; height: 4px; border: solid #969696; border-width: 1px 0 0 1px; transform: rotate(45deg); }
.spin::after { transform: rotate(225deg); }
.spin.off::before, .spin.off::after { border-color: #6a6a6a; }
.fld { display: flex; align-items: center; height: 15px; background: #454545; border: 1px solid #5c5c5c; flex: 1; min-width: 0; }
.fld input { flex: 1; width: 20px; height: 100%; padding-left: 4px; }
.chev, .go { width: 12px; height: 100%; flex: none; border-left: 1px solid #585858; }
.sel { display: flex; align-items: center; height: 15px; background: #454545; border: 1px solid #5c5c5c; flex: 1; padding-right: 5px; min-width: 0; }
.sel select { appearance: none; flex: 1; height: 100%; padding-left: 2px; }
.pic { flex: 1; height: 13px; background: #e6e6e6; margin-right: 2px; align-items: stretch; padding: 4px 3px; }
.bar i { flex: 1; background: #000; }
.pic.cnr { padding: 2px 3px 2px 0; }
.cnr i { flex: 1; border: solid #555; border-width: 1px 1px 0 0; }
.ic svg { margin: auto; }
.r { display: flex; align-items: center; }

/* Control bar */
.controls { height: 46px; flex: none; background: #535353; border-top: 1px solid #5a5a5a; border-bottom: 1px solid #474747; display: flex; align-items: center; padding-left: 20px; }
.g { flex: none; }
.two { display: grid; grid-template-rows: 20px 20px; align-items: center; }
.quad { display: grid; grid-template: 20px 20px / 20px 20px; align-items: center; }
.four { display: grid; grid-template: 20px 20px / repeat(4, 20px); align-items: center; }
.refpt { width: 21px; height: 21px; }
.g-ref { width: 27px; }
.g-pos { width: 89px; padding-right: 12px; }
.g-size { width: 84px; padding-right: 11px; margin-left: -2px; }
.g-pos label { width: 15px; }
.g-size label { width: 14px; text-align: center; }
.g-un { width: 22px; }
.g-scale { width: 86px; padding-right: 6px; }
.g-scale .r svg { margin-right: 4px; }
.g-link { width: 23px; }
.g-link .ic { width: 16px; height: 16px; }
.g-ang { width: 87px; padding-right: 9px; }
.g-ang .r svg { margin-right: 2px; }
.g-rot { width: 42px; }
.g-rot svg { width: 16px; }
.g-p { width: 31px; }
.pbox { display: grid; width: 22px; height: 22px; place-items: center; }
.pbox > * { grid-area: 1 / 1; }
.pbox svg { width: 22px; height: 22px; }
.pbox b { font: 16px/20px "Liberation Serif", serif; color: #fff; }
.g-dim { width: 46px; }
.g-dim svg { color: #777; }
.g-sw { width: 40px; }
.g-sw svg { width: 15px; height: 15px; }
.go { border: 1px solid #5c5c5c; background: #494949; }
.g-sw .go { height: 15px; margin-left: 2px; }
.g-st { width: 73px; padding-right: 9px; }
.g-fx { width: 77px; padding-right: 8px; }
.g-fx .r { gap: 2px; }
.g-fx .r:first-child { gap: 8px; }
em { font: italic 11px/12px "Liberation Serif", serif; color: #ccc; }
.g-wrap { width: 44px; }
.g-wrap .ic, .g-va .ic, .g-bal .ic { width: 16px; height: 16px; }
.g-cor { width: 91px; padding-right: 9px; }
.g-cor .r svg { margin-right: 4px; }
.g-cor .r:last-child { padding-left: 15px; }
.g-cols { width: 90px; padding-right: 9px; }
.g-cols .r svg { margin-right: 4px; }
.g-bal { width: 26px; }
.g-va { width: 47px; }
.g-fit { width: 27px; justify-items: start; }
.g-end { display: flex; align-items: center; gap: 8px; margin-left: auto; padding-right: 3px; }

/* Workspace */
.work { flex: 1; min-height: 0; display: flex; background: #434343; }
.col { display: flex; flex-direction: column; background: #535353; flex: none; overflow: hidden; }
.strip { height: 10px; flex: none; background: #434343; font-size: 8px; line-height: 8px; padding-left: 5px; font-weight: bold; color: #bbb; }
.strip.end { text-align: right; padding-right: 4px; }
.tools { width: 32px; border-right: 2px solid #444; align-items: center; }
.tools .strip { align-self: stretch; }
.toolset { display: flex; flex-direction: column; padding-top: 10px; }
.toolset button, .modes button { position: relative; width: 21px; height: 19px; }
.toolset svg { width: 13px; height: 13px; }
.more::after { content: ""; position: absolute; right: 1px; bottom: 2px; border: solid transparent; border-width: 2px 0 0 2px; border-bottom: 2px solid #ccc; }
.mini { height: 15px; display: flex; align-items: center; gap: 7px; font-size: 9px; color: #bbb; }
.mini svg { width: 9px; height: 9px; }
.defsw { width: 6px; height: 6px; border: 1px solid #000; background: #fff; box-shadow: 2px 2px 0 #222; }
.box { width: 8px; height: 8px; border: 2px solid #333; background: #999; }
.proxy { width: 24px; height: 24px; }
.modes { display: flex; flex-direction: column; gap: 4px; padding-top: 2px; }
.modes svg { width: 11px; height: 11px; }
.side { width: 30px; border-right: 1px solid #3d3d3d; }
.sg { display: flex; flex-direction: column; align-items: center; border-bottom: 1px solid #3d3d3d; padding: 8px 0 2px; }
.sg button { height: 22px; }
.sg svg { width: 16px; height: 16px; }
.one { padding: 5px 0 4px; }

/* Document window */
.doc { position: relative; flex: 1; min-width: 0; display: flex; flex-direction: column; }
.tabs { height: 21px; flex: none; background: #434343; display: flex; padding-top: 2px; }
.tab { display: flex; align-items: center; gap: 6px; padding: 0 10px 0 12px; background: #535353; font-family: "Noto Sans", sans-serif; font-weight: 600; }
.tab button { font-size: 8px; }
.view { flex: 1; min-height: 0; display: grid; grid-template: 13px 1fr / 12px 1fr 11px; background: #535353; }
.origin { background: #262626; }
.hr { width: 100%; height: 13px; background: #262626; }
.vr { grid-row: 2; grid-column: 1; width: 12px; height: 100%; background: #262626; }
.hr text { font: 8px "Noto Sans", sans-serif; fill: #ddd; }
.vr text { font: 7px Roboto, sans-serif; fill: #e6e6e6; }
.hr path, .vr path { stroke: #666; fill: none; }
.canvas { grid-row: 2; grid-column: 2; position: relative; overflow: hidden; background: #5e5e5e; }
.canvas > * { position: absolute; }
.bleed { left: 199px; top: -20px; width: 409px; height: 582px; border: 1px solid #a0585c; }
.sheet { left: 210px; top: -20px; width: 388px; height: 571px; background: #fff; box-shadow: 2px 2px 0 #1c1c1c; }
.margins { left: 232px; top: 11px; width: 343px; height: 518px; border: 1px solid #d9a3dc; border-left-color: #a98cc0; }
.frame { left: 265px; top: 42px; width: 220px; height: 316px; border: 1px solid #a9cbe0; color: #000; font: bold 9px/12px "Roboto Condensed", sans-serif; white-space: nowrap; }
.frame p { margin: 0 0 1px -1px; }
.frame p:first-child { margin-top: -1px; }
.resize { left: 265px; top: 357px; width: 220px; height: 60px; border: 1px solid #a9bccb; border-top-color: #8cbccc; }
.cursor { left: 368px; top: 409px; width: 10px; height: 15px; }
.tip { left: 382px; top: 409px; width: 56px; height: 25px; padding: 2px 4px; border-radius: 2px; background: #8c8c8c; color: #eee; font-size: 7px; line-height: 11px; }
.vscroll { grid-row: 2; grid-column: 3; background: #4b4b4b; padding: 28px 1px 0; }
.vscroll i { display: block; height: 120px; border-radius: 4px; background: #696969; }
.status { height: 14px; flex: none; background: #4a4a4a; display: flex; align-items: center; padding-left: 11px; }
.status .cv { margin-left: 8px; }
.zoom { width: 46px; }
.nav { display: flex; gap: 7px; font-size: 7px; color: #888; }
.nav.lit { color: #ddd; margin-left: 14px; }
.pg { width: 66px; flex: none; height: 13px; margin-left: 11px; }
.pre { width: 12px; height: 12px; margin-left: 12px; }
.std { margin-left: 12px; width: 95px; }
.ok { display: flex; align-items: center; gap: 4px; width: 86px; }
.ok::before { content: ""; width: 7px; height: 7px; border-radius: 4px; background: #17951b; }
.hscroll { flex: 1; height: 11px; padding: 1px 19px 1px 203px; background: #505050; }
.hscroll i { display: block; height: 9px; border-radius: 5px; background: #6a6a6a; }
.split { margin: 0 12px 0 6px; width: 12px; }

/* Floating panel */
.float { position: absolute; right: 0; top: 179px; width: 180px; background: #535353; border: 1px solid #3a3a3a; }
.float header { display: flex; align-items: center; height: 22px; background: #434343; }
.ftab { display: flex; align-items: center; gap: 3px; height: 100%; width: 60px; padding-left: 5px; background: #535353; font-weight: bold; }
.ftab small { font-size: 7px; }
.fx { margin-left: auto; padding-right: 6px; font-size: 12px; font-weight: bold; }
.fbody { padding: 4px 3px 5px 3px; }
.chars .font { height: 15px; padding-left: 1px; }
.font svg { width: 9px; height: 9px; }
.font input { padding-left: 4px; }
.font .cv { margin-left: 2px; }
.sty { gap: 6px; }
.fbody .sty { margin-top: 6px; }
.cg { display: grid; grid-template-columns: 14px 1fr 14px 1fr; grid-auto-rows: 20px; align-items: center; gap: 0 4px; }
.fbody .cg { margin-top: 7px; column-gap: 3px; }
.fbody .cg + .cg { margin-top: 4px; }
.cg .fld + svg { justify-self: end; }
.lang { margin: 8px 10px 0 16px; gap: 4px; }

/* Icon dock */
.dock { width: 33px; border-left: 2px solid #3c3c3c; border-right: 1px solid #3c3c3c; }
.dg { display: flex; flex-direction: column; align-items: center; border-bottom: 1px solid #424242; padding: 6px 0 2px; }
.dg.one { padding: 5px 0 5px; }
.dg button { width: 21px; height: 22px; }
.dg svg { width: 15px; height: 15px; }
.dg .big { font-size: 14px; gap: 1px; }
.big i { width: 1px; height: 13px; background: #aaa; }

/* Properties */
.props { width: 190px; }
.ptabs { height: 21px; flex: none; display: flex; background: #434343; font-weight: bold; color: #aaa; }
.ptabs button { padding: 0 9px; }
.ptabs .act { background: #535353; color: #fff; }
.pwrap { flex: 1; min-height: 0; display: flex; }
.pbody { flex: 1; min-width: 0; padding: 3px 9px 0 7px; overflow: hidden; }
.pscroll { width: 9px; padding-top: 8px; background: #4b4b4b; }
.pscroll i { display: block; height: 342px; background: #6a6a6a; border-radius: 4px; }
.first { margin-bottom: 6px; }
.sec { margin-top: 9px; }
.tf { display: flex; }
.tf .refpt { margin: 9px 0 0 3px; }
.tg { flex: 1; display: grid; grid-template-columns: 16px 1fr 20px 1fr; grid-auto-rows: 19px; align-items: center; justify-items: center; margin-left: 5px; }
.tg .fld { width: 100%; }
.tg .fld input { padding-left: 2px; }
.lk { width: 24px; margin-right: -6px; display: flex; flex-direction: column; align-items: center; gap: 22px; padding-top: 11px; }
.lk .ic { width: 15px; height: 17px; }
.flips { display: grid; grid-template-columns: 25px 35px 27px 16px; height: 19px; align-items: center; padding-left: 40px; }
.flips svg { width: 16px; }
.dots { display: flex; justify-content: flex-end; margin: 7px -6px 0 0; }
.dots button { width: 15px; height: 14px; background: #333; gap: 2px; }
.dots i { width: 2px; height: 2px; background: #ddd; }
.seg { display: grid; grid-template-columns: 1fr 1fr; margin-top: 2px; gap: 2px; }
.seg button { height: 15px; white-space: nowrap; }
.seg .act { background: #333; color: #4a86c5; }
.pstyle { display: flex; align-items: center; height: 24px; margin-top: 8px; padding-left: 3px; background: #454545; border: 1px solid #5c5c5c; }
.pstyle b { width: 18px; height: 18px; background: #fff; color: #222; font: 10px/18px "Liberation Serif", serif; text-align: center; }
.pstyle .sel { border: 0; }
.pact { display: grid; grid-template-columns: 1fr 26px 26px 14px; height: 16px; margin-top: 6px; padding: 0 1px; align-items: center; }
.pact svg:first-child { width: 12px; height: 12px; margin-left: 3px; }
.pact + .sec { margin-top: 10px; }
.ap { display: flex; align-items: center; height: 20px; }
.ap svg { margin-right: 7px; }
.ap a { width: 47px; color: #bbb; }
.ap .fld { flex: none; width: 51px; }
.ap .fld.pk { width: 40px; margin-left: 3px; background: none; }
.props .chars > .font { margin: 2px 0 2px; }
.props .chars > .sty { height: 20px; }
.lot { display: grid; grid-template-columns: 1fr 1fr; gap: 10px; margin-top: 6px; }
.lot button { border: 1px solid #626262; height: 15px; }
.tt { display: grid; grid-template-columns: 26px 36px 25px 37px 26px 14px; margin: 17px 0 0; font: bold 11px/20px "Liberation Serif", serif; }
.tt button { justify-content: flex-start; align-items: baseline; height: 20px; color: #ccc; padding-left: 2px; }
.tt small { font-size: 8px; }
.tt sup, .tt sub { font-size: 6px; line-height: 6px; }
.tt sup { align-self: flex-start; margin-top: 4px; }
.tt sub { align-self: flex-end; margin-bottom: 3px; }
```
FILE: app.js
```js
const NS = 'http://www.w3.org/2000/svg';

function add(parent, name, attrs, text) {
  const el = document.createElementNS(NS, name);
  for (const key in attrs) el.setAttribute(key, attrs[key]);
  if (text !== undefined) el.textContent = text;
  parent.appendChild(el);
  return el;
}

// Ruler steps: labels every 20 mm, a half mark every 10 mm, fine marks every 2 mm.
const h = document.getElementById('hruler');
const stepH = 36.95;
let d = '';
for (let mm = -112; mm <= 406; mm += 2) {
  const x = Math.round(210 + mm * stepH / 20) + 0.5;
  const len = mm % 20 === 0 ? 13 : mm % 10 === 0 ? 6 : 3;
  d += `M${x} 13V${13 - len}`;
  if (mm % 20 === 0) add(h, 'text', { x: x + 1, y: 9 }, Math.abs(mm));
}
add(h, 'path', { d });

const v = document.getElementById('vruler');
const stepV = 37.95;
d = '';
for (let mm = 8; mm <= 316; mm += 2) {
  const y = Math.round(-11 + mm * stepV / 20) + 0.5;
  const len = mm % 20 === 0 ? 12 : mm % 10 === 0 ? 5 : 2;
  d += `M12 ${y}H${12 - len}`;
  if (mm % 20 === 0) {
    const label = add(v, 'text', { x: 2, y: y + 8 });
    String(mm).split('').forEach((digit, i) => add(label, 'tspan', { x: 2, y: y + 8 + i * 8 }, digit));
  }
}
add(v, 'path', { d });
```
